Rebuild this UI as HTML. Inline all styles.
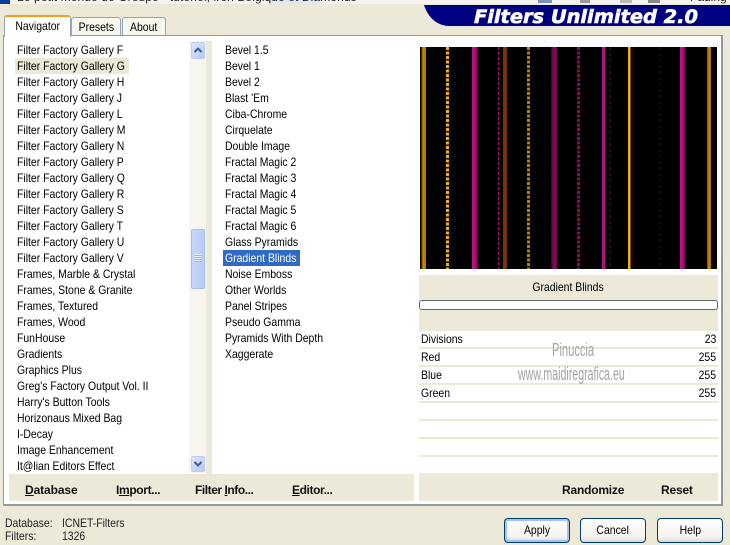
<!DOCTYPE html>
<html><head><meta charset="utf-8">
<style>
html,body{margin:0;padding:0}
body{width:730px;height:545px;overflow:hidden;position:relative;background:#ece9d8;font:12px "Liberation Sans",sans-serif;color:#000}
div{position:absolute;box-sizing:border-box}
.list{transform:scaleX(.87);transform-origin:0 0;height:432px;width:200px}
.l{left:0;height:16px;line-height:16px;white-space:nowrap}
.b{font-weight:bold;white-space:nowrap;top:482px;line-height:16px;letter-spacing:-.1px;color:#111}
.bt{top:518px;width:66px;height:25px;border:1px solid #003c74;border-radius:4px;background:linear-gradient(#fff,#f4f3ee 80%,#dcd8cc);text-align:center;line-height:23px}
.t{display:inline-block;transform:scaleX(.87);transform-origin:50% 50%}
.r{left:419px;width:299px;height:16px;background:#fff}
.r span{position:absolute;left:2px;top:0;line-height:16px;transform:scaleX(.87);transform-origin:0 0}
.r i{position:absolute;right:2px;top:0;line-height:16px;font-style:normal;transform:scaleX(.87);transform-origin:100% 0}
.s{line-height:14px;white-space:nowrap;color:#222;transform:scaleX(.87);transform-origin:0 0}
</style></head>
<body>
<div style="left:0;top:0;width:730px;height:5px;background:#f4f3ee;overflow:hidden">
<div style="left:0;top:0;width:10px;height:4px;background:#0a3a9c"></div>
<div style="left:270px;top:0;width:52px;height:4px;background:#dfe8f6"></div>
<div style="left:17px;top:-9px;line-height:13px;white-space:nowrap;color:#222;font-size:12px;letter-spacing:.1px">Le petit monde de Groupe - tutoriel, iron Belgique et Diamonds</div>
<div style="left:690px;top:-9px;line-height:13px;color:#222">Fading</div>
<div style="left:538px;top:0;width:14px;height:3px;background:#7d93b8"></div>
<div style="left:580px;top:0;width:10px;height:3px;background:#999"></div>
<div style="left:620px;top:0;width:12px;height:3px;background:#bbb"></div>
<div style="left:648px;top:0;width:12px;height:3px;background:#888"></div>
</div>
<div style="left:0;top:4px;width:730px;height:1px;background:#ece9d8"></div>

<svg style="position:absolute;left:424px;top:5px" width="306" height="22" viewBox="0 0 306 22">
<path d="M0 0H306V21H24C12 20 4 12 0 0Z" fill="#000080"/>
<text x="50" y="18" font-family="'DejaVu Sans',sans-serif" font-weight="bold" font-style="italic" font-size="19" fill="#fff" stroke="#fff" stroke-width=".6" textLength="224" lengthAdjust="spacingAndGlyphs">Filters Unlimited 2.0</text>
</svg>

<!-- tabs -->
<div style="left:71px;top:17px;width:50px;height:19px;background:#f7f6ef;border:1px solid #91a7b4;border-bottom:none;border-radius:3px 3px 0 0;text-align:center;line-height:19px"><span class="t">Presets</span></div>
<div style="left:122px;top:17px;width:44px;height:19px;background:#f7f6ef;border:1px solid #91a7b4;border-bottom:none;border-radius:3px 3px 0 0;text-align:center;line-height:19px"><span class="t">About</span></div>
<!-- panel -->
<div style="left:3px;top:35px;width:720px;height:471px;background:#fff;border:1px solid #919b9c;border-right-width:2px;border-bottom-width:2px"></div>
<div style="left:4px;top:15px;width:67px;height:22px;background:#fff;border:1px solid #91a7b4;border-top:2px solid #f0a020;border-bottom:none;border-radius:3px 3px 0 0;text-align:center;line-height:18px"><span class="t">Navigator</span></div>

<div style="left:15px;top:58px;width:114px;height:16px;background:#ece9d8"></div>
<div style="left:223px;top:250px;width:77px;height:16px;background:#316ac5"></div>

<!-- list 1 -->
<div class="list" style="left:17px;top:42px">
<div class="l" style="top:0">Filter Factory Gallery F</div>
<div class="l" style="top:16px">Filter Factory Gallery G</div>
<div class="l" style="top:32px">Filter Factory Gallery H</div>
<div class="l" style="top:48px">Filter Factory Gallery J</div>
<div class="l" style="top:64px">Filter Factory Gallery L</div>
<div class="l" style="top:80px">Filter Factory Gallery M</div>
<div class="l" style="top:96px">Filter Factory Gallery N</div>
<div class="l" style="top:112px">Filter Factory Gallery P</div>
<div class="l" style="top:128px">Filter Factory Gallery Q</div>
<div class="l" style="top:144px">Filter Factory Gallery R</div>
<div class="l" style="top:160px">Filter Factory Gallery S</div>
<div class="l" style="top:176px">Filter Factory Gallery T</div>
<div class="l" style="top:192px">Filter Factory Gallery U</div>
<div class="l" style="top:208px">Filter Factory Gallery V</div>
<div class="l" style="top:224px">Frames, Marble &amp; Crystal</div>
<div class="l" style="top:240px">Frames, Stone &amp; Granite</div>
<div class="l" style="top:256px">Frames, Textured</div>
<div class="l" style="top:272px">Frames, Wood</div>
<div class="l" style="top:288px">FunHouse</div>
<div class="l" style="top:304px">Gradients</div>
<div class="l" style="top:320px">Graphics Plus</div>
<div class="l" style="top:336px">Greg's Factory Output Vol. II</div>
<div class="l" style="top:352px">Harry's Button Tools</div>
<div class="l" style="top:368px">Horizonaus Mixed Bag</div>
<div class="l" style="top:384px">I-Decay</div>
<div class="l" style="top:400px">Image Enhancement</div>
<div class="l" style="top:416px">It@lian Editors Effect</div>
</div>

<!-- scrollbar -->
<div style="left:189px;top:41px;width:17px;height:432px;background:#f6f5ef"></div>
<div style="left:206px;top:41px;width:6px;height:433px;background:#ece9d8"></div>
<div style="left:191px;top:42px;width:14px;height:17px;background:linear-gradient(135deg,#dfe8fb,#b4c8f4);border:1px solid #bcd0f6;border-radius:2px"></div>
<svg style="position:absolute;left:191px;top:42px" width="14" height="17"><path d="M3.5 10L7 6.5L10.5 10" fill="none" stroke="#3c5a90" stroke-width="2"/></svg>
<div style="left:191px;top:229px;width:14px;height:60px;background:linear-gradient(90deg,#c6d5fa,#b8ccf6);border:1px solid #a8bdea;border-radius:2px"></div>
<div style="left:195px;top:254px;width:6px;height:8px;background:repeating-linear-gradient(#eef3ff 0 1px,#9db3e0 1px 2px)"></div>
<div style="left:191px;top:456px;width:14px;height:16px;background:linear-gradient(135deg,#dfe8fb,#b4c8f4);border:1px solid #bcd0f6;border-radius:2px"></div>
<svg style="position:absolute;left:191px;top:456px" width="14" height="16"><path d="M3.5 6L7 9.5L10.5 6" fill="none" stroke="#3c5a90" stroke-width="2"/></svg>

<!-- list 2 -->
<div class="list" style="left:225px;top:42px">
<div class="l" style="top:0">Bevel 1.5</div>
<div class="l" style="top:16px">Bevel 1</div>
<div class="l" style="top:32px">Bevel 2</div>
<div class="l" style="top:48px">Blast 'Em</div>
<div class="l" style="top:64px">Ciba-Chrome</div>
<div class="l" style="top:80px">Cirquelate</div>
<div class="l" style="top:96px">Double Image</div>
<div class="l" style="top:112px">Fractal Magic 2</div>
<div class="l" style="top:128px">Fractal Magic 3</div>
<div class="l" style="top:144px">Fractal Magic 4</div>
<div class="l" style="top:160px">Fractal Magic 5</div>
<div class="l" style="top:176px">Fractal Magic 6</div>
<div class="l" style="top:192px">Glass Pyramids</div>
<div class="l" style="top:208px;color:#fff">Gradient Blinds</div>
<div class="l" style="top:224px">Noise Emboss</div>
<div class="l" style="top:240px">Other Worlds</div>
<div class="l" style="top:256px">Panel Stripes</div>
<div class="l" style="top:272px">Pseudo Gamma</div>
<div class="l" style="top:288px">Pyramids With Depth</div>
<div class="l" style="top:304px">Xaggerate</div>
</div>

<!-- left bottom bar -->
<div style="left:9px;top:474px;width:405px;height:27px;background:#ece9d8"></div>
<div class="b" style="left:25px"><u>D</u>atabase</div>
<div class="b" style="left:116px;letter-spacing:-.35px">I<u>m</u>port...</div>
<div class="b" style="left:195px;letter-spacing:-.45px">Filter <u>I</u>nfo...</div>
<div class="b" style="left:292px;letter-spacing:-.4px"><u>E</u>ditor...</div>

<!-- right side -->
<div style="left:414px;top:41px;width:304px;height:6px;background:#fbfbfe"></div>
<svg style="position:absolute;left:420px;top:47px" width="297" height="222" viewBox="0 0 297 222">
<defs>
<linearGradient id="o" x1="0" x2="1"><stop offset="0" stop-color="#7a4a00"/><stop offset=".5" stop-color="#d08c00"/><stop offset="1" stop-color="#a06a00"/></linearGradient>
<linearGradient id="m" x1="0" x2="1"><stop offset="0" stop-color="#b8187e"/><stop offset=".6" stop-color="#a01070"/><stop offset="1" stop-color="#3a0428"/></linearGradient>
<linearGradient id="m2" x1="0" x2="1"><stop offset="0" stop-color="#3a0428"/><stop offset=".5" stop-color="#8a0c5c"/><stop offset="1" stop-color="#700850"/></linearGradient>
</defs>
<rect width="297" height="222" fill="#000"/>
<rect x="1.5" y="0" width="4.5" height="222" fill="url(#o)"/>
<line x1="27.5" y1="0" x2="27.5" y2="222" stroke="#f0b020" stroke-width="3" stroke-dasharray="3 1.5"/>
<rect x="52" y="0" width="6.5" height="222" fill="url(#m)"/>
<line x1="78.5" y1="0" x2="78.5" y2="222" stroke="#b01878" stroke-width="1" stroke-dasharray="3 2"/>
<rect x="83" y="0" width="4" height="222" fill="#7a3208"/>
<line x1="108.5" y1="0" x2="108.5" y2="222" stroke="#b87c10" stroke-width="3" stroke-dasharray="3 1.5"/>
<rect x="131" y="0" width="6" height="222" fill="url(#m2)"/>
<line x1="158.5" y1="0" x2="158.5" y2="222" stroke="#8a0c5c" stroke-width="3" stroke-dasharray="3 1.5"/>
<rect x="182" y="0" width="3.5" height="222" fill="#a81878"/>
<line x1="190" y1="0" x2="190" y2="222" stroke="#3c0420" stroke-width="2" stroke-dasharray="3 3"/>
<rect x="208" y="0" width="2.5" height="222" fill="#f0b010"/>
<rect x="212" y="0" width="2" height="222" fill="#1c0408"/>
<line x1="240" y1="0" x2="240" y2="222" stroke="#1c0408" stroke-width="2" stroke-dasharray="3 3"/>
<rect x="260" y="0" width="6" height="222" fill="url(#m)"/>
<rect x="287" y="0" width="4" height="222" fill="url(#o)"/>
</svg>
<div style="left:414px;top:269px;width:304px;height:6px;background:#fff"></div>
<div style="left:419px;top:275px;width:299px;height:56px;background:#ece9d8"></div>
<div style="left:419px;top:279px;width:299px;text-align:center;line-height:16px"><span class="t">Gradient Blinds</span></div>
<div style="left:419px;top:300px;width:299px;height:10px;background:#fff;border:1px solid #666;border-radius:3px"></div>

<div style="left:419px;top:331px;width:299px;height:142px;background:#ece9d8"></div>
<div class="r" style="top:331px"><span>Divisions</span><i>23</i></div>
<div class="r" style="top:349px"><span>Red</span><i>255</i></div>
<div class="r" style="top:367px"><span>Blue</span><i>255</i></div>
<div class="r" style="top:385px"><span>Green</span><i>255</i></div>
<div class="r" style="top:403px"></div>
<div class="r" style="top:421px"></div>
<div class="r" style="top:439px"></div>
<div class="r" style="top:457px"></div>

<!-- watermark -->
<div style="left:552px;top:340px;line-height:20px;font-size:18px;color:#a4a4a4;white-space:nowrap;transform:scaleX(.62);transform-origin:0 0">Pinuccia</div>
<div style="left:518px;top:364px;line-height:20px;font-size:18px;color:#a4a4a4;white-space:nowrap;transform:scaleX(.59);transform-origin:0 0">www.maidiregrafica.eu</div>

<div style="left:419px;top:473px;width:299px;height:28px;background:#ece9d8"></div>
<div class="b" style="left:562px;letter-spacing:-.2px">Randomize</div>
<div class="b" style="left:661px;letter-spacing:-.2px">Reset</div>

<!-- status -->
<div class="s" style="left:5px;top:516px">Database:</div>
<div class="s" style="left:62px;top:516px">ICNET-Filters</div>
<div class="s" style="left:5px;top:529px">Filters:</div>
<div class="s" style="left:62px;top:529px">1326</div>

<!-- buttons -->
<div class="bt" style="left:504px;box-shadow:inset 0 0 0 2px #a8c0ec"><span class="t">Apply</span></div>
<div class="bt" style="left:580px"><span class="t">Cancel</span></div>
<div class="bt" style="left:657px"><span class="t">Help</span></div>
</body></html>
